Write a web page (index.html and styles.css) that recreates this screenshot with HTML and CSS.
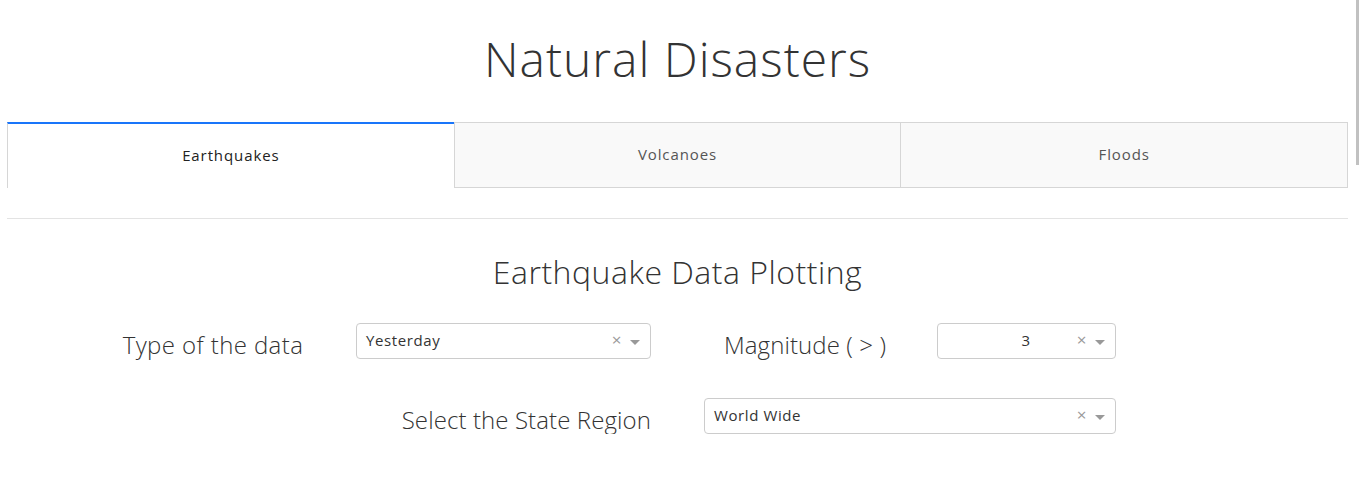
FILE: index.html
```html
<!DOCTYPE html>
<html>
<head>
<meta charset="utf-8">
<link rel="stylesheet" href="styles.css">
</head>
<body>
<div class="page">
  <h1 class="title">Natural Disasters</h1>
  <div class="tabs">
    <div class="tab tab-selected">Earthquakes</div>
    <div class="tab">Volcanoes</div>
    <div class="tab tab-last">Floods</div>
  </div>
  <hr class="rule">
  <h2 class="subtitle">Earthquake Data Plotting</h2>
  <div class="row row-one">
    <div class="label label-type">Type of the data</div>
    <div class="select select-type">
      <span class="value">Yesterday</span>
      <span class="clear">×</span>
      <span class="arrow"></span>
    </div>
    <div class="label label-mag">Magnitude ( &gt; )</div>
    <div class="select select-mag">
      <span class="value value-center">3</span>
      <span class="clear">×</span>
      <span class="arrow"></span>
    </div>
  </div>
  <div class="row row-two">
    <div class="label label-region">Select the State Region</div>
    <div class="select select-region">
      <span class="value">World Wide</span>
      <span class="clear">×</span>
      <span class="arrow"></span>
    </div>
  </div>
</div>
<div class="scroll-thumb"></div>
</body>
</html>
```

FILE: styles.css
```css
html, body {
  margin: 0;
  padding: 0;
  overflow: hidden;
  background: #fff;
}
body {
  font-family: "Open Sans", "Liberation Sans", sans-serif;
  color: #333;
}
.page {
  width: 1341px;
  margin-left: 7px;
}
.title {
  margin: 0;
  padding-top: 31px;
  height: 122px;
  box-sizing: border-box;
  text-align: center;
  font-weight: 300;
  font-size: 48px;
  line-height: 56px;
  letter-spacing: 1px;
  color: #333;
}
.tabs {
  display: flex;
  height: 66px;
}
.tab {
  flex: 1;
  display: flex;
  align-items: center;
  justify-content: center;
  background: #f9f9f9;
  border: 1px solid #d6d6d6;
  border-right: none;
  font-size: 15px;
  letter-spacing: 0.9px;
  color: #555;
  box-sizing: border-box;
  padding-bottom: 3px;
}
.tab-last {
  border-right: 1px solid #d6d6d6;
}
.tab-selected {
  background: #fff;
  border-top: 2px solid #1975fa;
  border-left: 1px solid #d6d6d6;
  border-right: none;
  border-bottom: none;
  color: #222;
  padding-top: 0;
  padding-bottom: 2px;
}
.rule {
  margin: 30px 0 0 0;
  border: none;
  border-top: 1px solid #e3e3e3;
  height: 0;
}
.subtitle {
  margin: 0;
  padding-top: 33px;
  height: 104px;
  box-sizing: border-box;
  text-align: center;
  font-weight: 300;
  font-size: 32px;
  line-height: 40px;
  letter-spacing: 0.5px;
  color: #333;
}
.row {
  display: flex;
  align-items: center;
  height: 36px;
}
.row-two {
  margin-top: 39px;
}
.label {
  font-size: 24px;
  font-weight: 300;
  color: #333;
  line-height: 36px;
  padding-top: 8px;
  letter-spacing: 0.4px;
}
.label-type {
  width: 230px;
  margin-left: 91px;
  text-align: center;
}
.label-mag {
  width: 230px;
  margin-left: 39px;
  text-align: center;
  letter-spacing: 0.1px;
}
.label-region {
  width: 320px;
  margin-left: 324px;
  text-align: right;
  letter-spacing: 0.1px;
}
.select {
  display: flex;
  align-items: center;
  height: 36px;
  box-sizing: border-box;
  border: 1px solid #ccc;
  border-radius: 4px;
  background: #fff;
  font-size: 15px;
  color: #333;
}
.select-type {
  width: 295px;
  margin-left: 28px;
}
.select-mag {
  width: 179px;
  margin-left: 17px;
}
.select-region {
  width: 412px;
  margin-left: 53px;
}
.value {
  flex: 1;
  padding-left: 9px;
  padding-bottom: 3px;
  letter-spacing: 0.6px;
}
.value-center {
  text-align: center;
  padding-left: 41px;
}
.clear {
  width: 17px;
  text-align: center;
  color: #999;
  font-size: 17px;
  padding-bottom: 3px;
}
.arrow {
  width: 25px;
  display: flex;
  justify-content: center;
  padding-right: 5px;
  box-sizing: border-box;
}
.arrow::before {
  content: "";
  border-style: solid;
  border-width: 5px 5px 2.5px;
  border-color: #999 transparent transparent;
  margin-top: 4px;
}
.scroll-thumb {
  position: fixed;
  top: 0;
  right: 0;
  width: 3px;
  height: 165px;
  background: #c1c1c1;
}
```
